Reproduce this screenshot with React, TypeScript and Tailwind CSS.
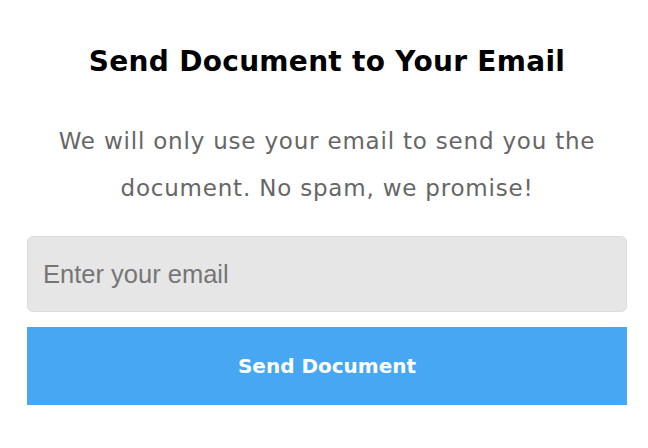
export default function App() {
  return (
    <div className="w-[648px] h-[448px] bg-white pl-[27px] pt-[40px]" style={{ fontFamily: "'DejaVu Sans', 'Noto Sans', sans-serif" }}>
      <div className="w-[600px] flex flex-col">
        <h1 className="text-center text-[28px] font-bold text-black leading-[44px] tracking-[0.3px]">Send Document to Your Email</h1>
        <p className="mt-[34px] mx-auto w-[580px] text-center text-[23px] leading-[47px] tracking-[0.8px] text-[#666666]">
          We will only use your email to send you the document. No spam, we promise!
        </p>
        <input
          type="text"
          placeholder="Enter your email"
          className="mt-[24px] h-[76px] w-full rounded-[6px] border border-[#dcdcdc] bg-[#e6e6e6] px-[15px] text-[25.5px] text-[#333] placeholder:text-[#767676] outline-none"
          style={{ fontFamily: "'Liberation Sans', Arial, sans-serif" }}
        />
        <button className="mt-[15px] h-[78px] w-full bg-[#48a7f2] text-white text-[20px] font-semibold">
          Send Document
        </button>
      </div>
    </div>
  );
}
